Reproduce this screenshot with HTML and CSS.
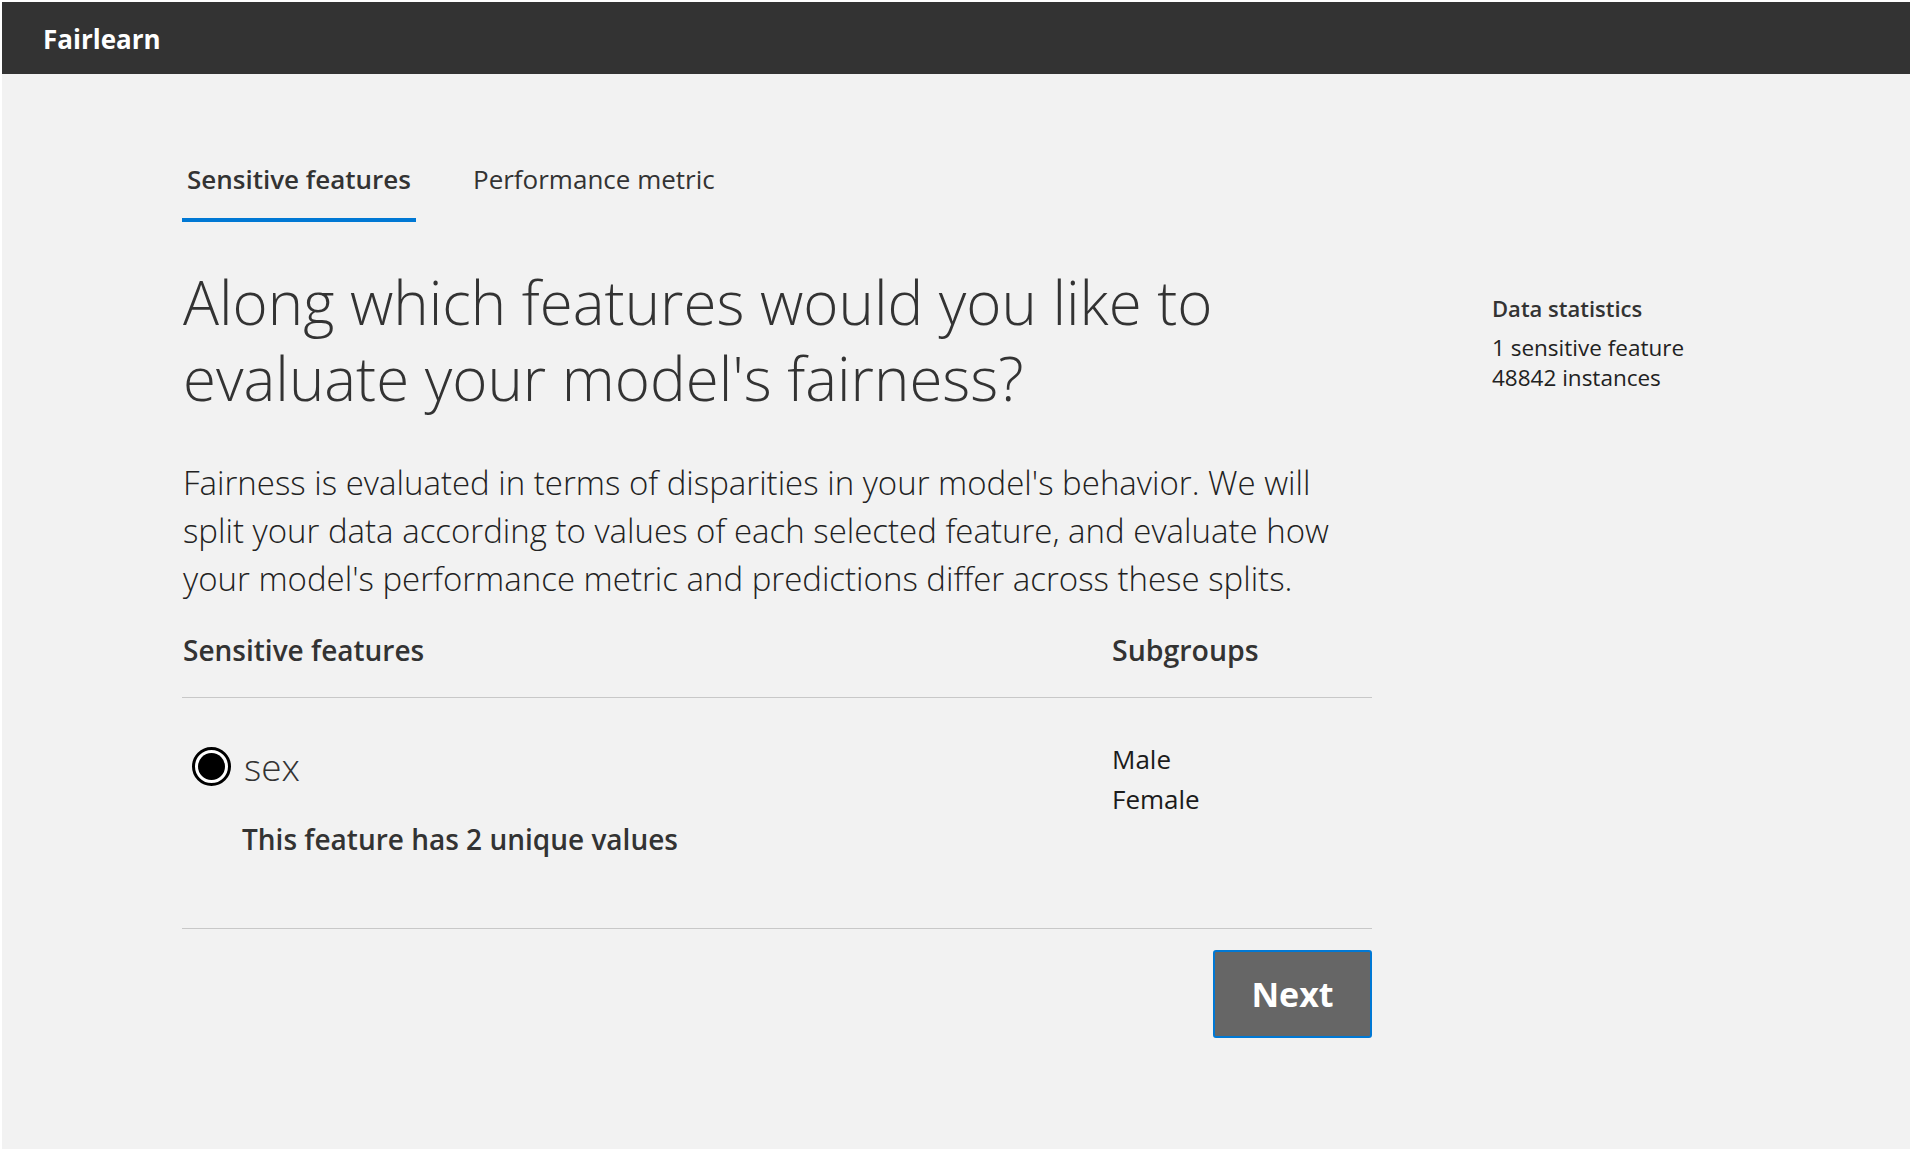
FILE: index.html
```html
<!DOCTYPE html>
<html lang="en">
<head>
<meta charset="utf-8">
<title>Fairlearn</title>
<link rel="stylesheet" href="styles.css">
</head>
<body>
<div class="app">
  <header class="topbar">
    <span class="brand">Fairlearn</span>
  </header>
  <main class="main">
    <section class="wizard">
      <nav class="tabs">
        <span class="tab tab-active">Sensitive features</span>
        <span class="tab">Performance metric</span>
      </nav>
      <h1 class="headline">Along which features would you like to evaluate your model's fairness?</h1>
      <p class="intro">Fairness is evaluated in terms of disparities in your model's behavior. We will split your data according to values of each selected feature, and evaluate how your model's performance metric and predictions differ across these splits.</p>
      <div class="table">
        <div class="table-head">
          <div class="th">Sensitive features</div>
          <div class="th">Subgroups</div>
        </div>
        <div class="table-row">
          <div class="feature">
            <div class="choice">
              <span class="radio"><span class="radio-dot"></span></span>
              <span class="feature-name">sex</span>
            </div>
            <div class="feature-desc">This feature has 2 unique values</div>
          </div>
          <div class="subgroups">
            <div>Male</div>
            <div>Female</div>
          </div>
        </div>
      </div>
      <div class="actions">
        <button class="next-btn" type="button">Next</button>
      </div>
    </section>
    <aside class="stats">
      <div class="stats-title">Data statistics</div>
      <div class="stats-line">1 sensitive feature</div>
      <div class="stats-line">48842 instances</div>
    </aside>
  </main>
</div>
</body>
</html>
```

FILE: styles.css
```css
* {
  box-sizing: border-box;
}

html, body {
  margin: 0;
  padding: 0;
  background: #ffffff;
}

body {
  font-family: "Open Sans", "Noto Sans", "Liberation Sans", sans-serif;
  color: #333333;
}

.app {
  margin: 2px 0 0 2px;
  min-height: calc(100vh - 3px);
  background: #f2f2f2;
  display: flex;
  flex-direction: column;
}

.topbar {
  height: 72px;
  background: #333333;
  display: flex;
  align-items: center;
  padding-left: 41px;
}

.brand {
  color: #ffffff;
  font-size: 26px;
  font-weight: 700;
  line-height: 32px;
  margin-top: 2px;
}

.main {
  display: flex;
  align-items: flex-start;
  gap: 120px;
  padding: 89px 0 0 180px;
}

.wizard {
  width: 1190px;
  flex: none;
}

.tabs {
  display: flex;
  gap: 52px;
}

.tab {
  font-size: 26px;
  line-height: 32px;
  font-weight: 400;
  color: #333333;
  padding: 0 5px 23px;
  border-bottom: 4px solid transparent;
}

.tab-active {
  font-weight: 600;
  border-bottom-color: #0078d4;
}

.headline {
  margin: 42px 0 0;
  font-size: 60px;
  line-height: 76px;
  font-weight: 300;
  color: #333333;
  padding-left: 1px;
}

.intro {
  margin: 42.5px 0 0;
  font-size: 33px;
  line-height: 48px;
  font-weight: 300;
  color: #222222;
  padding-left: 1px;
}

.table {
  margin-top: 29px;
}

.table-head,
.table-row {
  display: grid;
  grid-template-columns: 929px 1fr;
}

.table-head {
  padding-bottom: 29px;
  border-bottom: 1px solid #c8c8c8;
}

.th {
  font-size: 28px;
  line-height: 36px;
  font-weight: 600;
  color: #333333;
  padding-left: 1px;
}

.th + .th {
  font-size: 28.5px;
}

.table-row {
  padding: 38.5px 0 71px;
  border-bottom: 1px solid #c8c8c8;
}

.choice {
  display: flex;
  align-items: center;
  gap: 13px;
  padding-left: 10px;
}

.radio {
  width: 39px;
  height: 39px;
  margin-top: 4px;
  border-radius: 50%;
  border: 3px solid #000000;
  background: #ffffff;
  display: flex;
  align-items: center;
  justify-content: center;
  flex: none;
}

.radio-dot {
  width: 27px;
  height: 27px;
  border-radius: 50%;
  background: #000000;
}

.feature-name {
  font-size: 37px;
  line-height: 50px;
  font-weight: 300;
  color: #333333;
  margin-top: 6px;
}

.feature-desc {
  margin-top: 29px;
  padding-left: 60px;
  font-size: 28px;
  line-height: 36px;
  font-weight: 600;
  color: #333333;
}

.subgroups {
  margin-top: 2.5px;
  font-size: 26px;
  line-height: 40px;
  color: #1b1b1b;
  padding-left: 1px;
}

.actions {
  display: flex;
  justify-content: flex-end;
  margin-top: 21px;
}

.next-btn {
  width: 159px;
  height: 88px;
  border: 2px solid #0078d4;
  border-radius: 3px;
  background: #666666;
  color: #ffffff;
  font-family: "Open Sans", "Noto Sans", "Liberation Sans", sans-serif;
  font-size: 34px;
  font-weight: 700;
  line-height: 40px;
  padding: 0;
  cursor: pointer;
}

.stats {
  margin-top: 130px;
}

.stats-title {
  font-size: 22px;
  line-height: 30px;
  font-weight: 600;
  color: #333333;
  margin-bottom: 10px;
}

.stats-line {
  font-size: 22.5px;
  line-height: 30px;
  color: #222222;
}
```
